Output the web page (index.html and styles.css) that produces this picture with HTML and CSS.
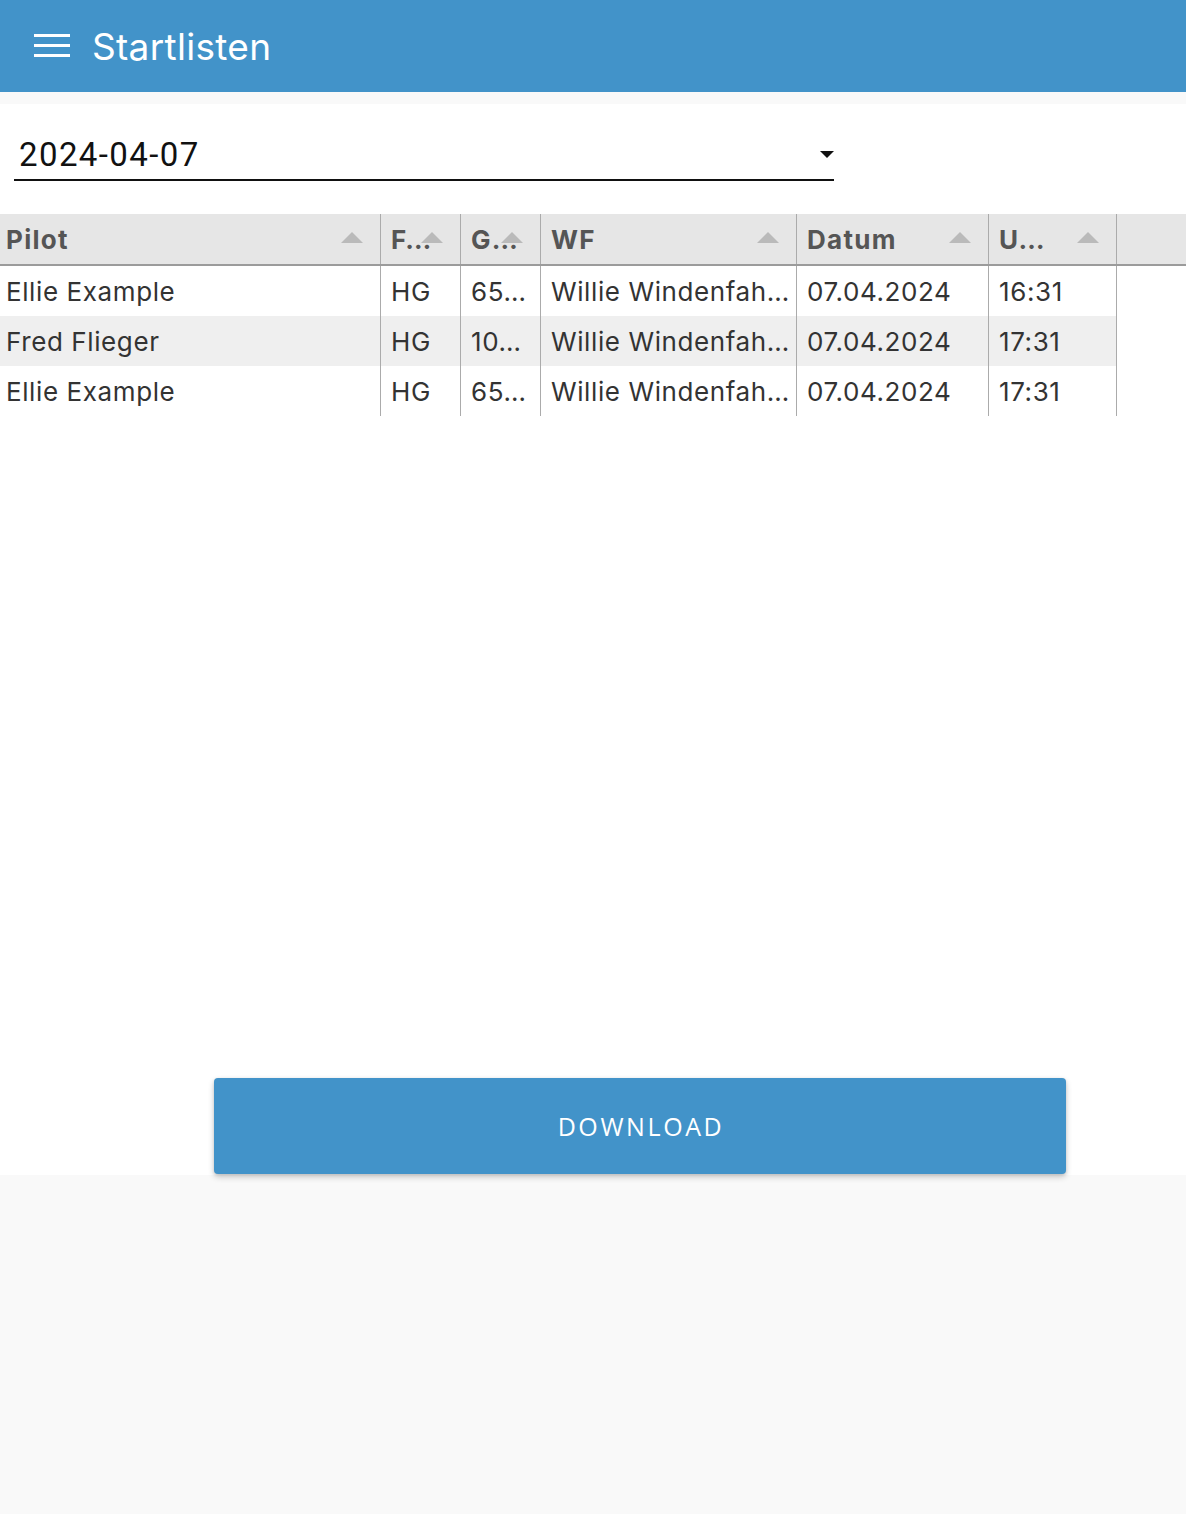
FILE: index.html
```html
<!DOCTYPE html>
<html lang="de">
<head>
<meta charset="utf-8">
<title>Startlisten</title>
<link rel="stylesheet" href="styles.css">
</head>
<body>
<header class="appbar">
  <button class="menu-btn" aria-label="Menü">
    <svg width="36" height="24" viewBox="0 0 36 24"><rect x="0" y="1" width="36" height="3" fill="#fff"/><rect x="0" y="11" width="36" height="3" fill="#fff"/><rect x="0" y="21" width="36" height="3" fill="#fff"/></svg>
  </button>
  <h1 class="title">Startlisten</h1>
</header>
<div class="gap"></div>
<main class="content">
  <div class="select">
    <span class="select-value">2024-04-07</span>
    <span class="select-caret"></span>
  </div>
  <div class="grid">
    <div class="row head">
      <div class="cell c-pilot">Pilot<span class="sort"></span></div>
      <div class="cell c-f">F…<span class="sort"></span></div>
      <div class="cell c-g">G…<span class="sort"></span></div>
      <div class="cell c-wf">WF<span class="sort"></span></div>
      <div class="cell c-datum">Datum<span class="sort"></span></div>
      <div class="cell c-u">U…<span class="sort"></span></div>
      <div class="cell c-fill"></div>
    </div>
    <div class="row">
      <div class="cell c-pilot">Ellie Example</div>
      <div class="cell c-f">HG</div>
      <div class="cell c-g">65…</div>
      <div class="cell c-wf">Willie Windenfah…</div>
      <div class="cell c-datum">07.04.2024</div>
      <div class="cell c-u">16:31</div>
    </div>
    <div class="row alt">
      <div class="cell c-pilot">Fred Flieger</div>
      <div class="cell c-f">HG</div>
      <div class="cell c-g">10…</div>
      <div class="cell c-wf">Willie Windenfah…</div>
      <div class="cell c-datum">07.04.2024</div>
      <div class="cell c-u">17:31</div>
    </div>
    <div class="row">
      <div class="cell c-pilot">Ellie Example</div>
      <div class="cell c-f">HG</div>
      <div class="cell c-g">65…</div>
      <div class="cell c-wf">Willie Windenfah…</div>
      <div class="cell c-datum">07.04.2024</div>
      <div class="cell c-u">17:31</div>
    </div>
  </div>
  <div class="actions">
    <button class="download">DOWNLOAD</button>
  </div>
</main>
</body>
</html>
```
FILE: styles.css
```css
* { box-sizing: border-box; }
html, body { margin: 0; padding: 0; }
body {
  background: #f9f9f9;
  font-family: Inter, "Noto Sans", sans-serif;
  width: 1186px;
  min-height: 1514px;
}
.appbar {
  height: 92px;
  background: #4293c9;
  display: flex;
  align-items: center;
  padding-left: 34px;
}
.menu-btn {
  background: none;
  border: 0;
  padding: 0;
  width: 36px;
  height: 24px;
  display: block;
  margin-right: 22px;
  margin-top: -2px;
}
.menu-btn svg { display: block; }
.title {
  margin: 0;
  color: #fff;
  font-family: Inter, sans-serif;
  font-weight: 400;
  font-size: 37px;
  letter-spacing: 0.3px;
}
.gap { height: 12px; }
.content {
  background: #fff;
  height: 1071px;
  display: flex;
  flex-direction: column;
  padding-top: 30px;
}
.select {
  margin-left: 14px;
  width: 820px;
  height: 47px;
  border-bottom: 2px solid #111;
  display: flex;
  align-items: center;
  justify-content: space-between;
  padding-left: 5px;
  padding-right: 0;
}
.select-value {
  font-family: Roboto, sans-serif;
  font-size: 33px;
  letter-spacing: 1.4px;
  color: #111;
  margin-top: -4px;
}
.select-caret {
  width: 0;
  height: 0;
  border-left: 7px solid transparent;
  border-right: 7px solid transparent;
  border-top: 7px solid #111;
  margin-right: 0;
  margin-top: -5px;
}
.grid { margin-top: 33px; }
.row {
  display: flex;
  height: 50px;
  width: 1117px;
}
.row.head {
  width: 1186px;
  height: 52px;
  background: #e6e6e6;
  border-bottom: 2px solid #9b9b9b;
}
.row.alt { background: #efefef; }
.cell {
  position: relative;
  border-right: 1px solid #ababab;
  padding-left: 10px;
  font-size: 26px;
  color: #333;
  display: flex;
  align-items: center;
  white-space: nowrap;
  overflow: hidden;
  letter-spacing: 0.6px;
}
.head .cell {
  font-weight: 700;
  color: #555;
  letter-spacing: 1.3px;
}
.c-pilot { width: 381px; padding-left: 6px; }
.c-f { width: 80px; }
.c-g { width: 80px; }
.c-wf { width: 256px; }
.c-datum { width: 192px; }
.c-u { width: 128px; }
.c-fill { flex: 1; border-right: 0; }
.sort {
  position: absolute;
  right: 17px;
  top: 18px;
  width: 0;
  height: 0;
  border-left: 11px solid transparent;
  border-right: 11px solid transparent;
  border-bottom: 11px solid #bababa;
}
.actions {
  margin-top: auto;
  padding-left: 214px;
  padding-bottom: 1px;
}
.download {
  width: 852px;
  height: 96px;
  background: #4293c9;
  color: #fff;
  border: 0;
  border-radius: 4px;
  font-family: "Open Sans", sans-serif;
  font-size: 25px;
  letter-spacing: 2.6px;
  padding: 0 0 0 2px;
  box-shadow: 0 3px 6px rgba(0,0,0,0.2), 0 1px 3px rgba(0,0,0,0.12);
  display: block;
}
```
